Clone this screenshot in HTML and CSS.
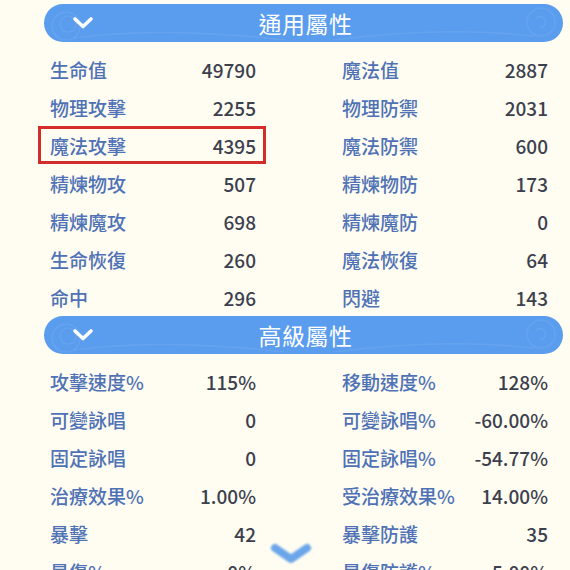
FILE: index.html
```html
<!DOCTYPE html>
<html lang="zh-Hant">
<head>
<meta charset="utf-8">
<link rel="stylesheet" href="styles.css">
</head>
<body>
<div class="page">
  <section class="section">
    <div class="bar">
      <svg class="deco" width="519" height="38" viewBox="0 0 519 38">
        <g fill="none" stroke="#ffffff" stroke-opacity="0.08" stroke-width="1.5">
          <circle cx="22" cy="22" r="14"/>
          <circle cx="24" cy="20" r="8"/>
          <circle cx="497" cy="18" r="14"/>
          <path d="M492 14 q6 -4 9 2 q2 6 -5 8"/>
          <path d="M30 34 Q120 22 240 36"/>
          <path d="M290 36 Q400 22 490 32"/>
        </g>
      </svg>
      <svg class="chev" width="22" height="14" viewBox="0 0 22 14"><path d="M3 3 L11 10.5 L19 3" fill="none" stroke="#fff" stroke-width="3.6" stroke-linecap="round" stroke-linejoin="round"/></svg>
      <span class="title">通用屬性</span>
    </div>
    <div class="grid">
      <div class="cell"><span class="lab">生命值</span><span class="val">49790</span></div>
      <div class="cell"><span class="lab">魔法值</span><span class="val">2887</span></div>
      <div class="cell"><span class="lab">物理攻擊</span><span class="val">2255</span></div>
      <div class="cell"><span class="lab">物理防禦</span><span class="val">2031</span></div>
      <div class="cell hl"><span class="lab">魔法攻擊</span><span class="val">4395</span></div>
      <div class="cell"><span class="lab">魔法防禦</span><span class="val">600</span></div>
      <div class="cell"><span class="lab">精煉物攻</span><span class="val">507</span></div>
      <div class="cell"><span class="lab">精煉物防</span><span class="val">173</span></div>
      <div class="cell"><span class="lab">精煉魔攻</span><span class="val">698</span></div>
      <div class="cell"><span class="lab">精煉魔防</span><span class="val">0</span></div>
      <div class="cell"><span class="lab">生命恢復</span><span class="val">260</span></div>
      <div class="cell"><span class="lab">魔法恢復</span><span class="val">64</span></div>
      <div class="cell"><span class="lab">命中</span><span class="val">296</span></div>
      <div class="cell"><span class="lab">閃避</span><span class="val">143</span></div>
    </div>
  </section>
  <section class="section">
    <div class="bar">
      <svg class="deco" width="519" height="38" viewBox="0 0 519 38">
        <g fill="none" stroke="#ffffff" stroke-opacity="0.08" stroke-width="1.5">
          <circle cx="22" cy="22" r="14"/>
          <circle cx="24" cy="20" r="8"/>
          <circle cx="497" cy="18" r="14"/>
          <path d="M492 14 q6 -4 9 2 q2 6 -5 8"/>
          <path d="M30 34 Q120 22 240 36"/>
          <path d="M290 36 Q400 22 490 32"/>
        </g>
      </svg>
      <svg class="chev" width="22" height="14" viewBox="0 0 22 14"><path d="M3 3 L11 10.5 L19 3" fill="none" stroke="#fff" stroke-width="3.6" stroke-linecap="round" stroke-linejoin="round"/></svg>
      <span class="title">高級屬性</span>
    </div>
    <div class="grid">
      <div class="cell"><span class="lab">攻擊速度%</span><span class="val">115%</span></div>
      <div class="cell"><span class="lab">移動速度%</span><span class="val">128%</span></div>
      <div class="cell"><span class="lab">可變詠唱</span><span class="val">0</span></div>
      <div class="cell"><span class="lab">可變詠唱%</span><span class="val">-60.00%</span></div>
      <div class="cell"><span class="lab">固定詠唱</span><span class="val">0</span></div>
      <div class="cell"><span class="lab">固定詠唱%</span><span class="val">-54.77%</span></div>
      <div class="cell"><span class="lab">治療效果%</span><span class="val">1.00%</span></div>
      <div class="cell"><span class="lab">受治療效果%</span><span class="val">14.00%</span></div>
      <div class="cell"><span class="lab">暴擊</span><span class="val">42</span></div>
      <div class="cell"><span class="lab">暴擊防護</span><span class="val">35</span></div>
      <div class="cell"><span class="lab">暴傷%</span><span class="val">0%</span></div>
      <div class="cell"><span class="lab">暴傷防護%</span><span class="val">5.00%</span></div>
    </div>
  </section>
</div>
<svg class="more" width="56" height="34" viewBox="0 0 56 34">
  <defs><filter id="gl" x="-30%" y="-50%" width="160%" height="200%"><feGaussianBlur stdDeviation="1.2"/></filter></defs>
  <path d="M12 10 L28 21 L44 10" fill="none" stroke="#6aa6ea" stroke-width="8" stroke-linecap="round" stroke-linejoin="round" filter="url(#gl)"/>
</svg>
</body>
</html>
```
FILE: styles.css
```css
html, body {
  margin: 0;
  padding: 0;
  height: 100%;
  overflow: hidden;
}
body {
  background: #fffdf1;
  font-family: "Noto Sans CJK TC", "Noto Sans", sans-serif;
}
.page {
  padding: 4px 0 0 38px;
}
.section {
  display: flex;
  flex-direction: column;
}
.bar {
  position: relative;
  margin-left: 6px;
  width: 519px;
  height: 38px;
  border-radius: 19px;
  background: #5a9cee;
  display: flex;
  align-items: center;
  justify-content: center;
  margin-bottom: 8px;
}
.deco {
  position: absolute;
  left: 0;
  top: 0;
}
.chev {
  position: absolute;
  left: 28px;
  top: 12px;
}
.title {
  color: #ffffff;
  font-size: 23px;
  font-weight: 400;
  line-height: 38px;
  letter-spacing: 0.5px;
  margin-left: 4px;
}
.grid {
  display: grid;
  grid-template-columns: 228px 228px;
  column-gap: 64px;
  grid-auto-rows: 38px;
}
.cell {
  display: flex;
  align-items: center;
  justify-content: space-between;
  padding: 0 10px 0 12px;
  font-size: 19px;
  font-weight: 500;
}
.cell.hl {
  box-shadow: inset 0 0 0 3px #d42b2b;
}
.lab {
  color: #4f72b6;
}
.val {
  color: #3c3f4e;
}
.more {
  position: absolute;
  left: 263px;
  top: 538px;
}
```
